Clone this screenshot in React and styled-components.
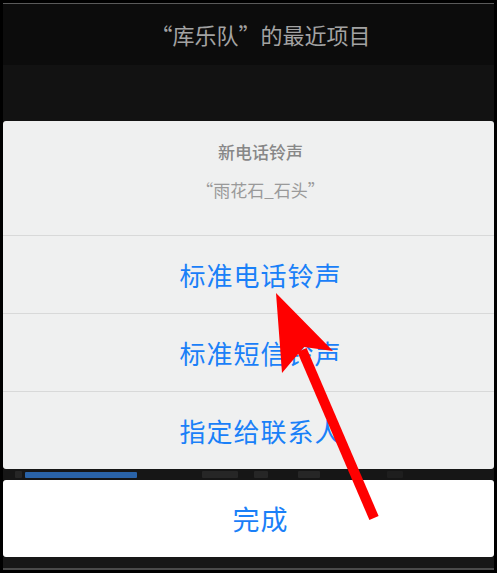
import React from 'react'
import styled, { createGlobalStyle } from 'styled-components'

const Global = createGlobalStyle`
  html, body { margin: 0; padding: 0; background: #000; }
  body { font-family: "Noto Sans CJK SC", "Noto Sans", sans-serif; }
`

const Frame = styled.div`
  position: relative;
  width: 497px;
  height: 573px;
  box-sizing: border-box;
  padding: 3px 3px 0 3px;
  background: #000;
  display: flex;
  flex-direction: column;
  overflow: hidden;
`

// the original page is wider than the crop, so its centre sits ~12px right
const Centered = styled.div`
  display: flex;
  align-items: center;
  justify-content: center;
  padding-left: 24px;
  box-sizing: border-box;
`

const TopBar = styled(Centered)`
  height: 62px;
  border-top: 1px solid #5a5a5a;
  background: #0c0c0c;
  color: #a3a3a3;
  font-size: 22px;
  padding-bottom: 2px;
`

const Backdrop = styled.div`
  height: ${p => p.$h}px;
  background: ${p => p.$bg};
`

const Sheet = styled.div`
  background: #eff0f0;
  display: flex;
  flex-direction: column;
  border-radius: 3px;
`

const Header = styled(Centered)`
  height: 114px;
  flex-direction: column;
  gap: 14px;
  padding-bottom: 14px;
`

const HeaderTitle = styled.div`
  font-size: 17px;
  font-weight: 500;
  color: #878787;
  line-height: 24px;
`

const HeaderSub = styled.div`
  font-size: 17px;
  color: #9a9a9a;
  line-height: 24px;
`

const Row = styled(Centered)`
  height: 78px;
  border-top: 1px solid #d8d9d9;
  color: #1a80f8;
  font-size: 26px;
  letter-spacing: 1px;
`

const Strip = styled.div`
  height: 11px;
  background: #161616;
  display: flex;
  align-items: center;
`

const Knob = styled.div`
  flex-shrink: 0;
  width: ${p => p.$w}px;
  height: ${p => p.$h || 7}px;
  margin-left: ${p => p.$ml || 0}px;
  background: ${p => p.$bg || '#262626'};
  border-radius: 1px;
  filter: blur(0.5px);
`

const DoneButton = styled(Centered)`
  height: 77px;
  background: #fff;
  color: #1a80f8;
  font-size: 27px;
  letter-spacing: 1px;
  border-radius: 3px;
`

const Bottom = styled.div`
  height: 11px;
  background: #171717;
  border-bottom: 2px solid #4a4a4a;
`

const Arrow = styled.svg`
  position: absolute;
  left: 0;
  top: 0;
  pointer-events: none;
`

export default function App() {
  return (
    <>
      <Global />
      <Frame>
        <TopBar>“库乐队”的最近项目</TopBar>
        <Backdrop $h={56} $bg="#121212" />
        <Sheet>
          <Header>
            <HeaderTitle>新电话铃声</HeaderTitle>
            <HeaderSub>“雨花石_石头”</HeaderSub>
          </Header>
          <Row>标准电话铃声</Row>
          <Row>标准短信铃声</Row>
          <Row>指定给联系人</Row>
        </Sheet>
        <Strip>
          <Knob $w={7} $ml={12} />
          <Knob $w={112} $ml={3} $h={6} $bg="#2a63a8" />
          <Knob $w={36} $ml={65} />
          <Knob $w={14} $ml={16} />
          <Knob $w={22} $ml={30} />
          <Knob $w={16} $ml={67} $bg="#1e1e1e" />
        </Strip>
        <DoneButton>完成</DoneButton>
        <Bottom />
        <Arrow width="497" height="573" viewBox="0 0 497 573">
          <line x1="374" y1="518" x2="302" y2="350" stroke="#ff0000" strokeWidth="10" />
          <polygon points="276,293 333,351 304,347 282,373" fill="#ff0000" />
        </Arrow>
      </Frame>
    </>
  )
}
